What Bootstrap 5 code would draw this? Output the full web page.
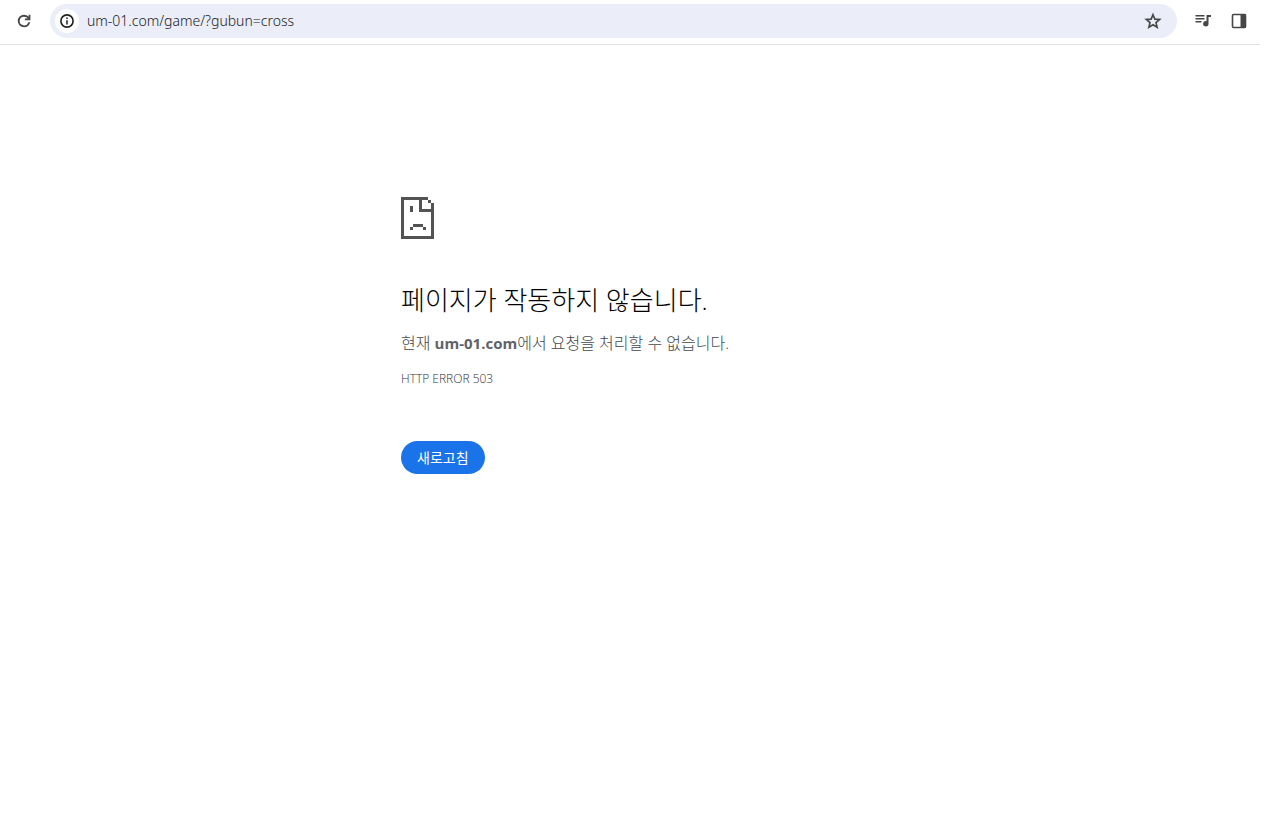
<!DOCTYPE html>
<html lang="ko">
<head>
<meta charset="utf-8">
<meta name="viewport" content="width=device-width, initial-scale=1">
<title>um-01.com</title>
<link href="https://cdn.jsdelivr.net/npm/bootstrap@5.3.0/dist/css/bootstrap.min.css" rel="stylesheet">
<style>
  body { font-family: "Open Sans", "Noto Sans CJK KR", sans-serif; color: #202124; background: #fff; }
  .toolbar { height: 45px; padding: 4px 6px 6px 9px; border-bottom: 1px solid #dfe1e3; margin-right: 21px; gap: 6px; }
  .tool-btn { width: 30px; height: 30px; color: #474747; }
  .tool-btn svg, .site-btn svg { display: block; }
  .omnibox { height: 34px; background: #ebeef8; padding: 0 9px 0 5px; margin-left: 5px; margin-right: 5px; }
  .site-btn { width: 24px; height: 24px; background: #fff; color: #1f1f1f; }
  .address { font-family: "Noto Sans", sans-serif; font-size: 14px; font-weight: 300; color: #202124; line-height: 20px; margin-left: 8px; }
  .error-page { padding-left: 121px; padding-top: 152px; }
  .error-box { max-width: 600px; color: #5f6368; font-weight: 300; }
  .error-box h1 { font-size: 26px; line-height: 30px; font-weight: 300; color: #000; margin: 46px 0 16px; }
  .error-box p { font-size: 16px; line-height: 24px; margin: 0 0 16px; color: #45484c; }
  .error-box strong { font-size: 15px; font-weight: 700; color: #5f6368; }
  .error-box .error-code { font-size: 12px; line-height: 16px; margin-bottom: 54px; color: #303236; }
  .reload-btn { height: 33px; font-size: 14px; line-height: 20px; background: #1a73e8; color: #fff; padding: 0 16px; }
</style>
</head>
<body>
<header class="toolbar d-flex align-items-center">
  <button class="tool-btn btn p-0 border-0 d-flex align-items-center justify-content-center" type="button" aria-label="새로고침">
    <svg width="18" height="18" viewBox="0 0 24 24" fill="currentColor"><path d="M12 20.3a8.3 8.3 0 1 1 0-16.600c2.500 0 4.600 1 6.200 2.700V3.700h2.300v7.300h-7.300V8.700h3.900A5.800 5.800 0 0 0 12 6.200a5.800 5.800 0 1 0 5.600 7.400h2.600A8.300 8.300 0 0 1 12 20.300z"/></svg>
  </button>
  <div class="omnibox rounded-pill d-flex align-items-center flex-grow-1">
    <button class="site-btn btn p-0 border-0 rounded-circle d-flex align-items-center justify-content-center flex-shrink-0" type="button" aria-label="사이트 정보">
      <svg width="14" height="14" viewBox="0 0 14 14" fill="none" stroke="currentColor"><circle cx="7" cy="7" r="6.100" stroke-width="1.600"/><path d="M7 6.200v4.200M7 3.500v1.600" stroke-width="1.500"/></svg>
    </button>
    <input class="address flex-grow-1 border-0 bg-transparent p-0" type="text" aria-label="주소" value="um-01.com/game/?gubun=cross">
    <button class="tool-btn btn p-0 border-0 d-flex align-items-center justify-content-center" type="button" aria-label="북마크">
      <svg width="18" height="18" viewBox="0 0 24 24" fill="none" stroke="currentColor" stroke-width="2.200"><path d="M12 3.600l2.500 5.900 6.400.5-4.900 4.200 1.500 6.200-5.500-3.300-5.500 3.300L8 14.200 3.100 10l6.400-.5z"/></svg>
    </button>
  </div>
  <button class="tool-btn btn p-0 border-0 d-flex align-items-center justify-content-center" type="button" aria-label="미디어 제어">
    <svg width="18" height="18" viewBox="0 0 18 18" fill="currentColor"><path d="M1.500 3h9v1.500h-9zM1.500 6h9v1.500h-9zM1.500 9h6v1.500h-6zM12.500 3H17v2h-2.500v6.800a2.700 2.700 0 1 1-2-2.600z"/></svg>
  </button>
  <button class="tool-btn btn p-0 border-0 d-flex align-items-center justify-content-center" type="button" aria-label="측면 패널">
    <svg width="16" height="16" viewBox="0 0 16 16"><rect x="1.500" y="1.500" width="13" height="13" rx="1" fill="none" stroke="currentColor" stroke-width="1.600"/><path d="M9.500 1H15v14H9.500z" fill="currentColor"/></svg>
  </button>
</header>
<main class="error-page">
  <div class="error-box mx-auto">
    <svg class="d-block" width="33" height="42" viewBox="0 0 33 42" fill="#535353" shape-rendering="crispEdges" aria-hidden="true"><path d="M0 0h27v3h-6v9h12v30H0zM3 3v36h27V15H18V3zM27 3h3v3h-3zM30 6h3v6h-3zM9 9h3v6H9zM12 27h10v3H12zM9 30h3v3H9zM22 30h3v3h-3z" fill-rule="evenodd"/></svg>
    <h1>페이지가 작동하지 않습니다.</h1>
    <p>현재 <strong>um-01.com</strong>에서 요청을 처리할 수 없습니다.</p>
    <p class="error-code">HTTP ERROR 503</p>
    <button class="reload-btn btn border-0 rounded-pill" type="button">새로고침</button>
  </div>
</main>
<script src="https://cdn.jsdelivr.net/npm/bootstrap@5.3.0/dist/js/bootstrap.bundle.min.js"></script>
</body>
</html>
